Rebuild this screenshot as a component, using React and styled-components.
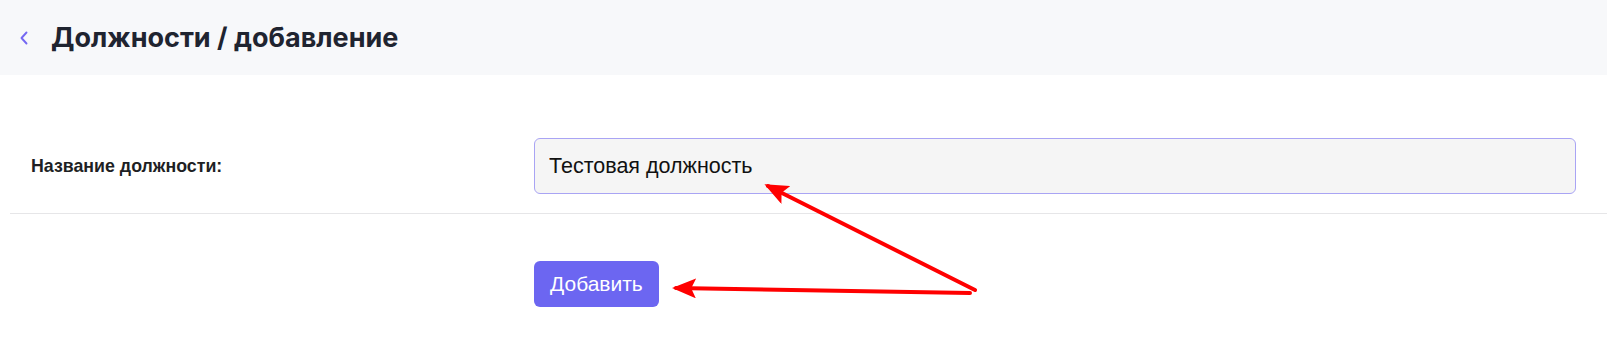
import React from 'react'
import styled, { createGlobalStyle } from 'styled-components'

const GlobalStyle = createGlobalStyle`
  html, body {
    margin: 0;
    padding: 0;
    background: #ffffff;
    font-family: "Liberation Sans", Arial, sans-serif;
  }
`

const Page = styled.div`
  position: relative;
  width: 1607px;
  height: 348px;
  overflow: hidden;
`

const Header = styled.div`
  display: flex;
  align-items: center;
  height: 75px;
  padding-left: 18px;
  background: #f7f8fa;
  box-sizing: border-box;
`

const BackButton = styled.button`
  display: flex;
  align-items: center;
  justify-content: center;
  width: 12px;
  height: 20px;
  margin-right: 21px;
  padding: 0;
  border: none;
  background: transparent;
  color: #7468f2;
  cursor: pointer;
`

const Title = styled.h1`
  margin: 0;
  font-family: Inter, "Noto Sans", sans-serif;
  font-size: 27px;
  font-weight: 700;
  color: #1f2430;
`

const Content = styled.div`
  padding: 43px 0 0 10px;
`

const FieldRow = styled.div`
  display: grid;
  grid-template-columns: 503px 1fr;
  align-items: center;
  padding: 20px 31px 19px 21px;
  border-bottom: 1px solid #e6e6e8;
`

const Label = styled.label`
  font-family: "Liberation Sans", Arial, sans-serif;
  font-size: 17.8px;
  font-weight: 700;
  color: #1e1f24;
`

const Input = styled.input`
  height: 56px;
  box-sizing: border-box;
  padding: 0 14px;
  border: 1px solid #a9a4f4;
  border-radius: 6px;
  background: #f5f5f5;
  font-family: "Liberation Sans", Arial, sans-serif;
  font-size: 21.5px;
  color: #111111;
  outline: none;
`

const Actions = styled.div`
  padding: 47px 0 0 524px;
`

const SubmitButton = styled.button`
  height: 46px;
  padding: 0 16px;
  border: none;
  border-radius: 6px;
  background: #6c66f1;
  color: #ffffff;
  font-family: "Liberation Sans", Arial, sans-serif;
  font-size: 21px;
  cursor: pointer;
`

const Annotations = styled.svg`
  position: absolute;
  left: 0;
  top: 0;
  pointer-events: none;
`

const ChevronLeft = () => (
  <svg width="10" height="14" viewBox="0 0 10 14" fill="none">
    <path d="M7.5 1.5 L2.5 7 L7.5 12.5" stroke="currentColor" strokeWidth="1.9" strokeLinecap="round" strokeLinejoin="round" />
  </svg>
)

export default function App () {
  return (
    <Page>
      <GlobalStyle />
      <Header>
        <BackButton><ChevronLeft /></BackButton>
        <Title>Должности / добавление</Title>
      </Header>
      <Content>
        <FieldRow>
          <Label>Название должности:</Label>
          <Input defaultValue='Тестовая должность' />
        </FieldRow>
        <Actions>
          <SubmitButton>Добавить</SubmitButton>
        </Actions>
      </Content>
      <Annotations width='1607' height='348' viewBox='0 0 1607 348'>
        <defs>
          <marker id='head' markerWidth='6' markerHeight='5' refX='5' refY='2.5' orient='auto' markerUnits='strokeWidth'>
            <path d='M0 0 L6 2.5 L0 5 L1.2 2.5 Z' fill='#ff0000' />
          </marker>
        </defs>
        <line x1='975' y1='290' x2='768' y2='186' stroke='#ff0000' strokeWidth='4' strokeLinecap='round' markerEnd='url(#head)' />
        <line x1='970' y1='293' x2='676' y2='288' stroke='#ff0000' strokeWidth='4' strokeLinecap='round' markerEnd='url(#head)' />
      </Annotations>
    </Page>
  )
}
